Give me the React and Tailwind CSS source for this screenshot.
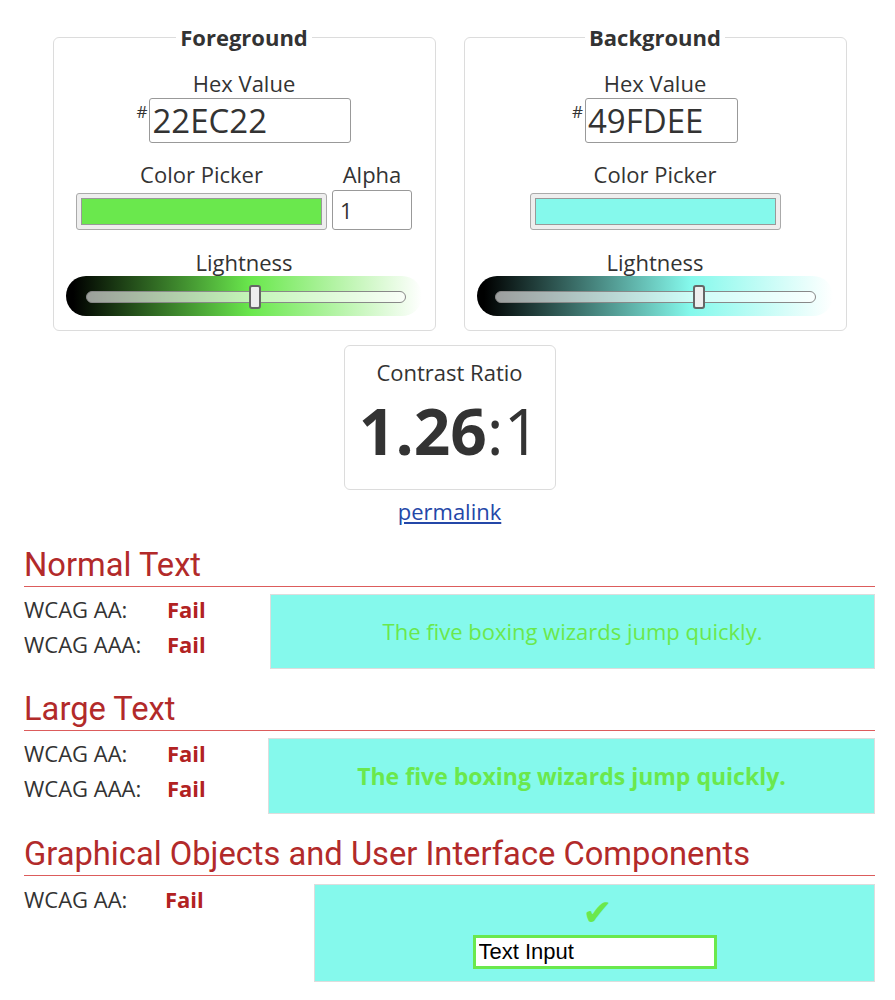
import React from "react";

function Lightness({ barClass, trackClass, thumbClass }) {
    return (
        <div className={`relative h-[40px] w-[356px] rounded-full ${barClass}`}>
            <div className={`absolute top-[15px] h-[12px] rounded-full border border-[#888] bg-white/60 ${trackClass}`} />
            <div className={`absolute top-[9px] h-[24px] w-[12px] -translate-x-1/2 rounded-[3px] border-2 border-[#666] bg-[#eee] ${thumbClass}`} />
        </div>
    );
}

function ColorPanel({ title, hex, hexWidth, swatch, alpha, barClass, trackClass, thumbClass }) {
    return (
        <fieldset className="w-[383px] rounded-md border border-[#dcdcdc] pb-[14px]">
            <legend className="mx-auto px-1 text-[22px] font-bold leading-[27px]">{title}</legend>
            <div className="flex flex-col items-center pt-[19px]">
                <div className="leading-[27px]">Hex Value</div>
                <div className="mt-[1px] flex items-start">
                    <span className="mr-[2px] mt-[4px] text-[17px] leading-[20px]">#</span>
                    <input
                        type="text"
                        readOnly
                        value={hex}
                        className={`h-[45px] rounded-[3px] border border-[#999] pl-[2px] text-[33px] text-[#333] focus:outline-none ${hexWidth}`}
                    />
                </div>

                <div className="mt-[18px] flex items-start gap-[5px]">
                    <div className="flex flex-col items-center">
                        <div className="leading-[27px]">Color Picker</div>
                        <div className="mt-[5px] h-[37px] w-[251px] rounded-[3px] border border-[#aaa] bg-[#eee] p-[4px]">
                            <div className={`h-full w-full border border-[#999] ${swatch}`} />
                        </div>
                    </div>
                    {alpha && (
                        <div className="flex flex-col items-center">
                            <div className="leading-[27px]">Alpha</div>
                            <input
                                type="text"
                                readOnly
                                value="1"
                                className="mt-[2px] h-[40px] w-[80px] rounded-[3px] border border-[#999] pl-[7px] text-[22px] text-[#333] focus:outline-none"
                            />
                        </div>
                    )}
                </div>

                <div className="mt-[19px] leading-[27px]">Lightness</div>
                <Lightness barClass={barClass} trackClass={trackClass} thumbClass={thumbClass} />
            </div>
        </fieldset>
    );
}

function Heading({ children }) {
    return (
        <h2 className="mt-[23px] border-b border-solid border-b-[#dc5c5c] pb-[3px] font-['Roboto',sans-serif] text-[32.7px] leading-[35px] text-[#b22a2a]">
            {children}
        </h2>
    );
}

function ResultRow({ label, labelWidth }) {
    return (
        <div className="flex leading-[35px]">
            <span className={labelWidth}>{label}</span>
            <span className="font-bold text-[#b22222]">Fail</span>
        </div>
    );
}

export default function App() {
    return (
        <div className="min-h-[1000px] bg-white font-['Open_Sans',sans-serif] text-[22px] text-[#333]">
            <div className="ml-[24px] w-[851px] pt-[24px] pb-[20px]">
                <div className="flex justify-center gap-[28px]">
                    <ColorPanel
                        title="Foreground"
                        hex="22EC22"
                        hexWidth="w-[202px]"
                        swatch="bg-[#6ae84d]"
                        alpha
                        barClass="bg-[linear-gradient(to_right,#000_2%,#6ae84d_52%,#fff_100%)]"
                        trackClass="left-[20px] right-[16px]"
                        thumbClass="left-[189px]"
                    />
                    <ColorPanel
                        title="Background"
                        hex="49FDEE"
                        hexWidth="w-[153px]"
                        swatch="bg-[#85f9ec]"
                        barClass="bg-[linear-gradient(to_right,#000_2%,#85f9ec_60%,#fff_100%)]"
                        trackClass="left-[18px] right-[17px]"
                        thumbClass="left-[222px]"
                    />
                </div>

                <div className="mx-auto mt-[14px] flex h-[145px] w-[212px] flex-col items-center rounded-md border border-[#dcdcdc] pt-[13px]">
                    <div className="leading-[27px]">Contrast Ratio</div>
                    <div className="mt-[13px] text-[64px] leading-none">
                        <span className="font-bold">1.26</span>:1
                    </div>
                </div>

                <div className="mt-[8px] text-center leading-[27px]">
                    <a href="#" className="text-[#2447a8] underline">permalink</a>
                </div>

                <Heading>Normal Text</Heading>
                <div className="mt-[5px] flex items-start">
                    <div className="w-[246px]">
                        <ResultRow label="WCAG AA:" labelWidth="w-[143px]" />
                        <ResultRow label="WCAG AAA:" labelWidth="w-[143px]" />
                    </div>
                    <div className="mt-[2px] flex h-[75px] flex-1 items-center justify-center border border-[#ddd] bg-[#85f9ec] text-[22px] text-[#6ae84d]">
                        The five boxing wizards jump quickly.
                    </div>
                </div>

                <Heading>Large Text</Heading>
                <div className="mt-[5px] flex items-start">
                    <div className="w-[244px]">
                        <ResultRow label="WCAG AA:" labelWidth="w-[143px]" />
                        <ResultRow label="WCAG AAA:" labelWidth="w-[143px]" />
                    </div>
                    <div className="mt-[2px] flex h-[76px] flex-1 items-center justify-center border border-[#ddd] bg-[#85f9ec] text-[23px] font-bold text-[#6ae84d]">
                        The five boxing wizards jump quickly.
                    </div>
                </div>

                <Heading>Graphical Objects and User Interface Components</Heading>
                <div className="mt-[6px] flex items-start">
                    <div className="w-[290px]">
                        <ResultRow label="WCAG AA:" labelWidth="w-[141px]" />
                    </div>
                    <div className="mt-[2px] flex h-[98px] flex-1 flex-col items-center border border-[#ddd] bg-[#85f9ec] pt-[10px]">
                        <span className="ml-[6px] font-['DejaVu_Sans',sans-serif] text-[36px] leading-[36px] text-[#6ae84d]">✔</span>
                        <input
                            type="text"
                            readOnly
                            value="Text Input"
                            className="mt-[4px] h-[34px] w-[244px] border-[3px] border-[#6ae84d] bg-white pl-[3px] font-['Liberation_Sans',sans-serif] text-[22px] text-black focus:outline-none"
                        />
                    </div>
                </div>
            </div>
        </div>
    );
}
